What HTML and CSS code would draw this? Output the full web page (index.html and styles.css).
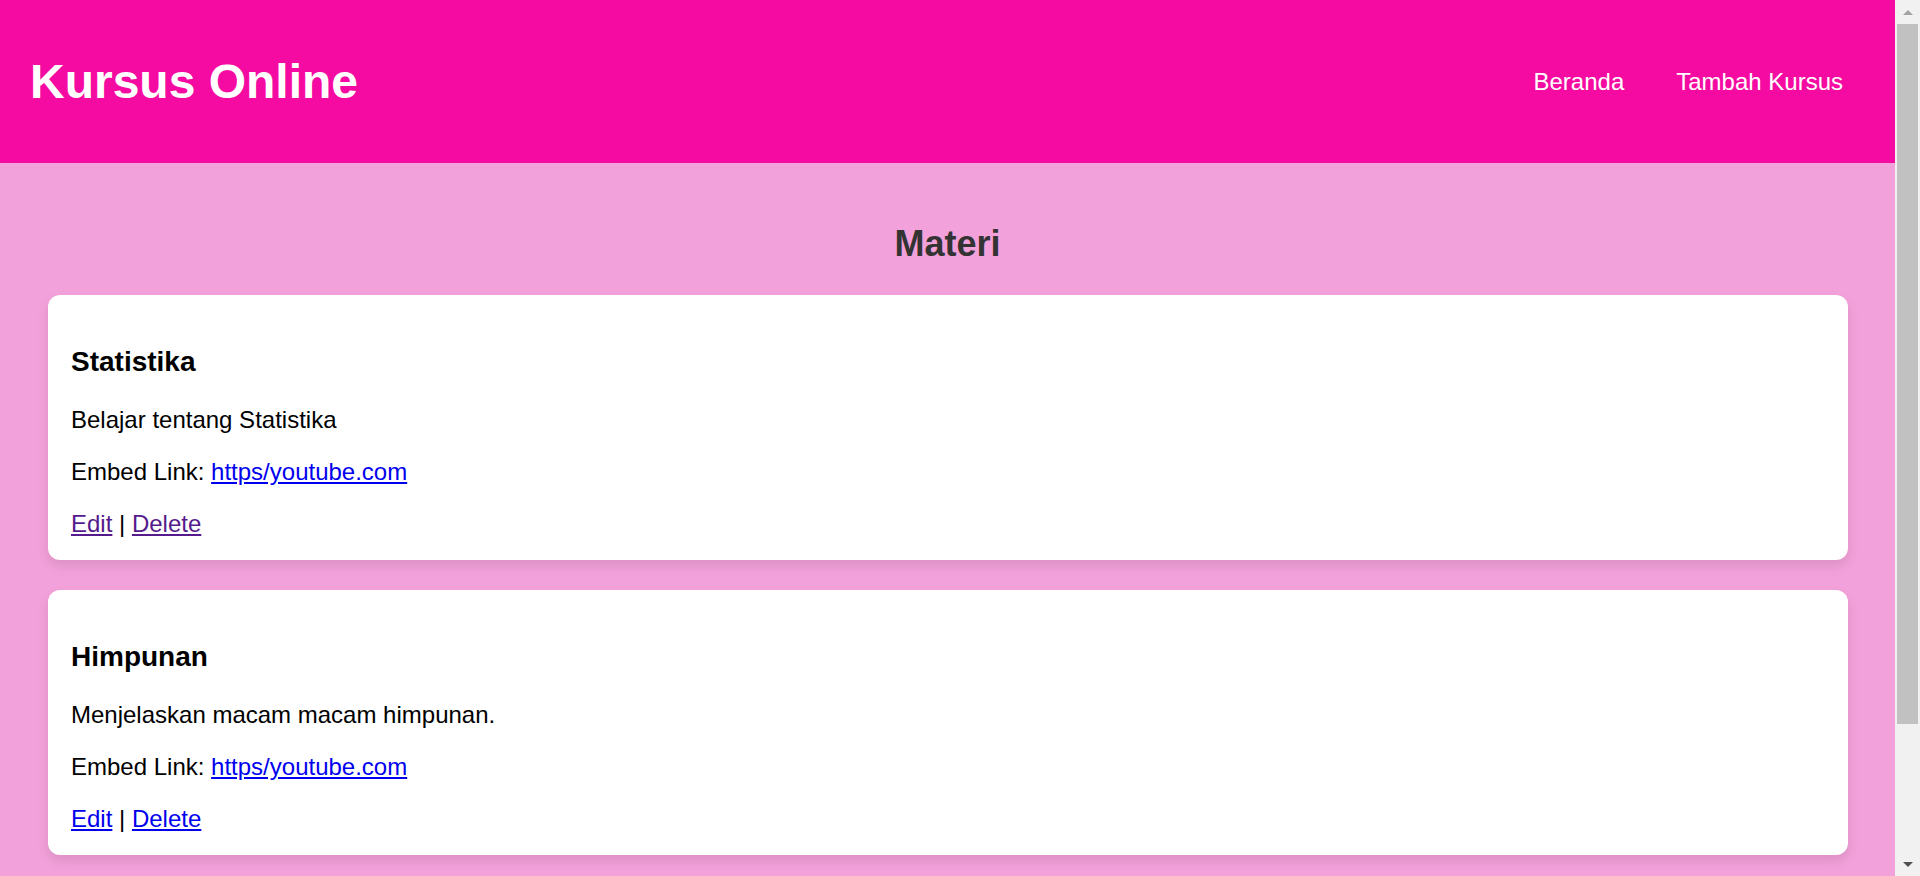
FILE: index.html
```html
<!DOCTYPE html>
<html lang="id">
<head>
<meta charset="utf-8">
<title>Kursus Online</title>
<link rel="stylesheet" href="styles.css">
</head>
<body>
<div class="page">
  <header class="site-header">
    <h1 class="brand">Kursus Online</h1>
    <nav class="nav">
      <a class="nav-link" href="#">Beranda</a>
      <a class="nav-link" href="#">Tambah Kursus</a>
    </nav>
  </header>
  <main class="container">
    <h2 class="page-title">Materi</h2>
    <section class="card">
      <h3 class="card-title">Statistika</h3>
      <p class="card-text">Belajar tentang Statistika</p>
      <p class="card-text">Embed Link: <a class="link" href="#">https/youtube.com</a></p>
      <div class="card-actions"><a class="link visited" href="#">Edit</a> | <a class="link visited" href="#">Delete</a></div>
    </section>
    <section class="card">
      <h3 class="card-title">Himpunan</h3>
      <p class="card-text">Menjelaskan macam macam himpunan.</p>
      <p class="card-text">Embed Link: <a class="link" href="#">https/youtube.com</a></p>
      <div class="card-actions"><a class="link" href="#">Edit</a> | <a class="link" href="#">Delete</a></div>
    </section>
  </main>
</div>
<div class="scrollbar" aria-hidden="true">
  <div class="sb-btn"><span class="sb-arrow sb-up"></span></div>
  <div class="sb-track"><div class="sb-thumb"></div></div>
  <div class="sb-btn"><span class="sb-arrow sb-down"></span></div>
</div>
</body>
</html>
```
FILE: styles.css
```css
html {
  background: #f3a1da;
}
body {
  margin: 0;
  display: flex;
  align-items: flex-start;
  font-family: "Liberation Sans", Arial, sans-serif;
  font-size: 24px;
  color: #000;
  background: #f3a1da;
}
.page {
  flex: 1;
  min-width: 0;
}

.site-header {
  display: flex;
  justify-content: space-between;
  align-items: center;
  height: 163px;
  padding: 0 52px 0 30px;
  background: #f50ba1;
  color: #fff;
}
.brand {
  margin: 0;
  font-size: 48px;
  font-weight: bold;
}
.nav {
  display: flex;
  gap: 52px;
}
.nav-link {
  color: #fff;
  text-decoration: none;
  font-size: 24px;
}

.container {
  max-width: 1800px;
  margin: 0 auto;
  padding: 30px 0 152px;
}
.page-title {
  margin: 30px 0;
  text-align: center;
  font-size: 36px;
  font-weight: bold;
  color: #333;
}
.card {
  background: #fff;
  border-radius: 12px;
  padding: 21px 22px 22px 23.5px;
  margin-bottom: 30px;
  box-shadow: 0 6px 12px rgba(0, 0, 0, 0.1);
}
.card-title {
  margin: 30px 0 28px;
  font-size: 28px;
  font-weight: bold;
}
.card-text {
  margin: 0 0 24px;
}
.card-actions {
  margin-top: 24px;
}
.link {
  color: #0000ee;
  text-decoration: underline;
}
.link.visited {
  color: #551a8b;
}

/* browser scrollbar as seen in the screenshot */
.scrollbar {
  position: sticky;
  top: 0;
  flex: 0 0 25px;
  width: 25px;
  height: 100vh;
  display: flex;
  flex-direction: column;
  background: #f1f1f1;
}
.sb-btn {
  height: 24px;
  display: flex;
  align-items: center;
  justify-content: center;
}
.sb-arrow {
  width: 0;
  height: 0;
  border-left: 5px solid transparent;
  border-right: 5px solid transparent;
}
.sb-up {
  border-bottom: 5px solid #a3a3a3;
}
.sb-down {
  border-top: 5px solid #505050;
}
.sb-track {
  flex: 1;
  padding: 0 2px;
}
.sb-thumb {
  height: 700px;
  background: #c1c1c1;
}
```
